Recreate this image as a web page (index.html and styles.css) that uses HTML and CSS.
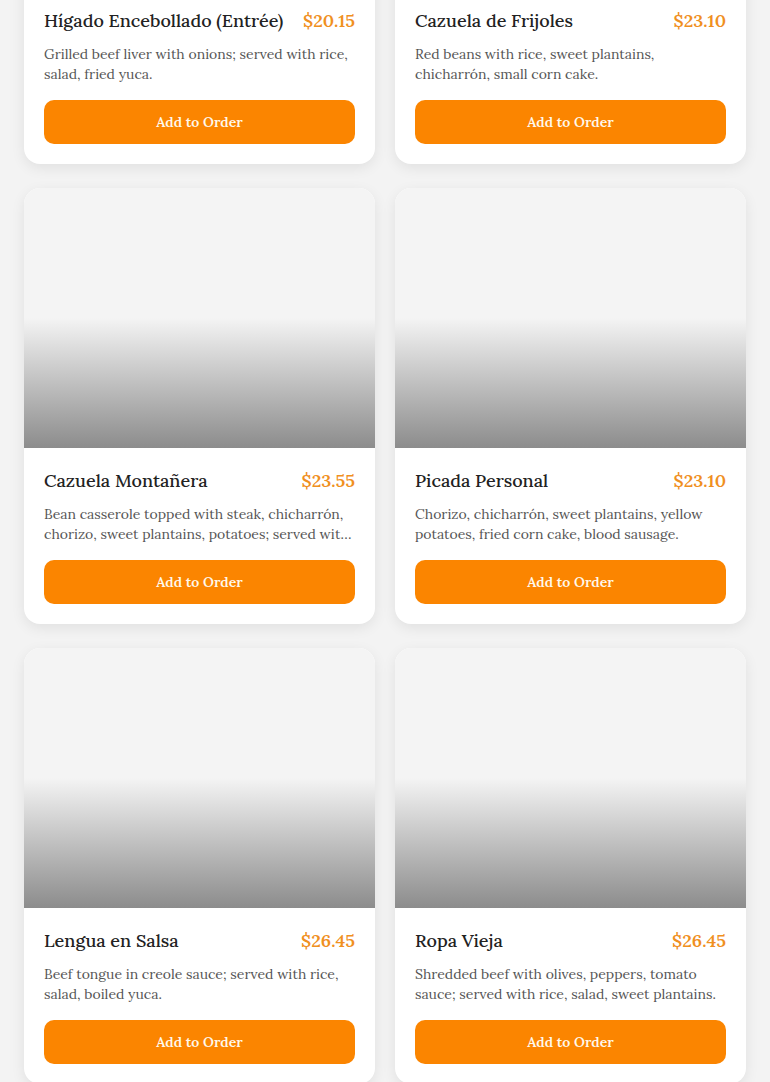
FILE: index.html
```html
<!DOCTYPE html>
<html lang="en">
<head>
<meta charset="utf-8">
<title>Menu</title>
<link rel="stylesheet" href="styles.css">
</head>
<body>
<main class="menu-grid">
  <article class="card">
    <div class="card-img"></div>
    <div class="card-body">
      <div class="card-head"><h3 class="card-title">Hígado Encebollado (Entrée)</h3><span class="card-price">$20.15</span></div>
      <p class="card-desc">Grilled beef liver with onions; served with rice, salad, fried yuca.</p>
      <button class="card-btn">Add to Order</button>
    </div>
  </article>
  <article class="card">
    <div class="card-img"></div>
    <div class="card-body">
      <div class="card-head"><h3 class="card-title">Cazuela de Frijoles</h3><span class="card-price">$23.10</span></div>
      <p class="card-desc">Red beans with rice, sweet plantains, chicharrón, small corn cake.</p>
      <button class="card-btn">Add to Order</button>
    </div>
  </article>
  <article class="card">
    <div class="card-img"></div>
    <div class="card-body">
      <div class="card-head"><h3 class="card-title">Cazuela Montañera</h3><span class="card-price">$23.55</span></div>
      <p class="card-desc">Bean casserole topped with steak, chicharrón, chorizo, sweet plantains, potatoes; served with rice and salad.</p>
      <button class="card-btn">Add to Order</button>
    </div>
  </article>
  <article class="card">
    <div class="card-img"></div>
    <div class="card-body">
      <div class="card-head"><h3 class="card-title">Picada Personal</h3><span class="card-price">$23.10</span></div>
      <p class="card-desc">Chorizo, chicharrón, sweet plantains, yellow potatoes, fried corn cake, blood sausage.</p>
      <button class="card-btn">Add to Order</button>
    </div>
  </article>
  <article class="card">
    <div class="card-img"></div>
    <div class="card-body">
      <div class="card-head"><h3 class="card-title">Lengua en Salsa</h3><span class="card-price">$26.45</span></div>
      <p class="card-desc">Beef tongue in creole sauce; served with rice, salad, boiled yuca.</p>
      <button class="card-btn">Add to Order</button>
    </div>
  </article>
  <article class="card">
    <div class="card-img"></div>
    <div class="card-body">
      <div class="card-head"><h3 class="card-title">Ropa Vieja</h3><span class="card-price">$26.45</span></div>
      <p class="card-desc">Shredded beef with olives, peppers, tomato sauce; served with rice, salad, sweet plantains.</p>
      <button class="card-btn">Add to Order</button>
    </div>
  </article>
</main>
</body>
</html>
```
FILE: styles.css
```css
* { box-sizing: border-box; }
html, body { margin: 0; padding: 0; }
body {
  background: #f3f3f3;
  font-family: Lora, "Liberation Serif", serif;
  color: #222;
}
.menu-grid {
  display: grid;
  grid-template-columns: 351px 351px;
  column-gap: 20px;
  row-gap: 24px;
  padding: 0 24px 24px;
  margin-top: -272px;
}
.card {
  background: #fff;
  border-radius: 16px;
  overflow: hidden;
  box-shadow: 0 4px 14px rgba(0, 0, 0, 0.08);
  display: flex;
  flex-direction: column;
}
.card-img {
  height: 260px;
  background: linear-gradient(to bottom, #f4f4f4 0%, #f4f4f4 50%, #8c8c8c 100%);
}
.card-body {
  padding: 20px;
  display: flex;
  flex-direction: column;
}
.card-head {
  display: flex;
  justify-content: space-between;
  align-items: center;
  gap: 12px;
  height: 26px;
}
.card-title {
  margin: 0;
  font-size: 18px;
  font-weight: 500;
  color: #222;
  line-height: 26px;
  white-space: nowrap;
}
.card-price {
  font-size: 18px;
  font-weight: 600;
  color: #f0901f;
  line-height: 26px;
}
.card-desc {
  margin: 10px 0 0;
  font-size: 14px;
  line-height: 20px;
  color: #555;
  height: 40px;
  display: -webkit-box;
  -webkit-line-clamp: 2;
  -webkit-box-orient: vertical;
  overflow: hidden;
}
.card-btn {
  margin-top: 16px;
  height: 44px;
  border: none;
  border-radius: 10px;
  background: #fb8500;
  color: #fff8ec;
  font-family: inherit;
  font-size: 14px;
  font-weight: 600;
  cursor: pointer;
}
```
